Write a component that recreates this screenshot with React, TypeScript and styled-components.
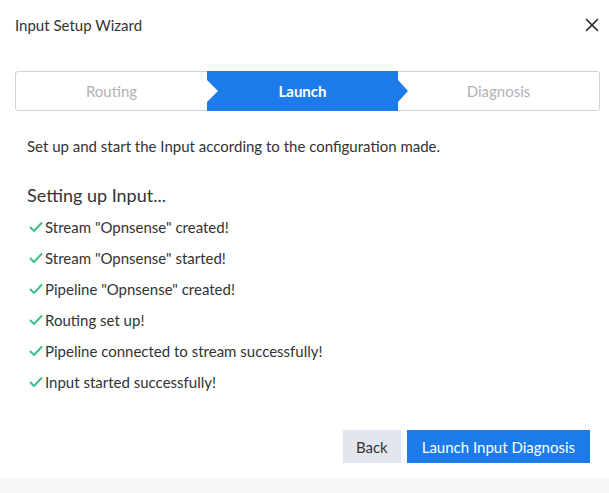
import styled, { createGlobalStyle } from 'styled-components';

const GlobalStyle = createGlobalStyle`
    html, body {
        margin: 0;
        padding: 0;
        background: #f7f7f8;
    }
    body {
        font-family: Lato, 'Noto Sans', sans-serif;
        color: #333840;
    }
`;

const steps = ['Routing', 'Launch', 'Diagnosis'];
const activeStep = 1;

const results = [
    'Stream "Opnsense" created!',
    'Stream "Opnsense" started!',
    'Pipeline "Opnsense" created!',
    'Routing set up!',
    'Pipeline connected to stream successfully!',
    'Input started successfully!'
];

const CheckIcon = () => (
    <svg width="14" height="12" viewBox="0 0 14 12" fill="none">
        <path d="M1.5 6.5 L5 10 L12.5 2" stroke="#3cc08c" strokeWidth="2" strokeLinecap="round" strokeLinejoin="round" />
    </svg>
);

const CloseIcon = () => (
    <svg width="14" height="14" viewBox="0 0 14 14" fill="none">
        <path d="M1.5 1.5 L12.5 12.5 M12.5 1.5 L1.5 12.5" stroke="#222" strokeWidth="1.6" strokeLinecap="round" />
    </svg>
);

export default function App() {
    return (
        <>
            <GlobalStyle />
            <Modal>
                <Header>
                    <Title>Input Setup Wizard</Title>
                    <CloseButton type="button" aria-label="Close">
                        <CloseIcon />
                    </CloseButton>
                </Header>
                <Stepper>
                    {steps.map((s, i) => (
                        <Step key={s} $active={i === activeStep}>
                            {s}
                            {i === activeStep && <Arrow />}
                        </Step>
                    ))}
                </Stepper>
                <Body>
                    <Lead>Set up and start the Input according to the configuration made.</Lead>
                    <Heading>Setting up Input...</Heading>
                    <List>
                        {results.map((r) => (
                            <Item key={r}>
                                <CheckIcon />
                                <span>{r}</span>
                            </Item>
                        ))}
                    </List>
                </Body>
                <Footer>
                    <Button type="button">Back</Button>
                    <Button type="button" $primary>
                        Launch Input Diagnosis
                    </Button>
                </Footer>
            </Modal>
        </>
    );
}

const Modal = styled.div`
    width: 609px;
    height: 478px;
    background: #fff;
    box-sizing: border-box;
    padding: 0 9px 0 15px;
    display: flex;
    flex-direction: column;
`;

const Header = styled.div`
    display: flex;
    justify-content: space-between;
    align-items: center;
    height: 50px;
`;

const Title = styled.h4`
    margin: 0;
    font-size: 15px;
    font-weight: 400;
    color: #333;
`;

const CloseButton = styled.button`
    border: none;
    background: none;
    padding: 0;
    width: 16px;
    height: 16px;
    display: flex;
    align-items: center;
    justify-content: center;
    cursor: pointer;
`;

const Stepper = styled.div`
    margin-top: 21px;
    width: 585px;
    height: 40px;
    box-sizing: border-box;
    border: 1px solid #d0d2d6;
    border-radius: 3px;
    display: grid;
    grid-template-columns: 191px 191px 1fr;
`;

const Step = styled.div<{ $active?: boolean }>`
    position: relative;
    display: flex;
    align-items: center;
    justify-content: center;
    font-size: 15px;
    color: ${(p) => (p.$active ? '#fff' : '#b3b3b3')};
    background: ${(p) => (p.$active ? '#1a7be9' : 'transparent')};
    margin: ${(p) => (p.$active ? '-1px 0' : '0')};
    font-weight: ${(p) => (p.$active ? 700 : 400)};
    ${(p) =>
        p.$active &&
        `
        &::before {
            content: '';
            position: absolute;
            left: 0;
            top: 50%;
            transform: translateY(-50%);
            border-top: 11px solid transparent;
            border-bottom: 11px solid transparent;
            border-left: 11px solid #fff;
        }
    `}
`;

const Arrow = styled.span`
    position: absolute;
    right: -10px;
    top: 50%;
    transform: translateY(-50%);
    border-top: 11px solid transparent;
    border-bottom: 11px solid transparent;
    border-left: 10px solid #1a7be9;
`;

const Body = styled.div`
    padding: 0 12px;
    flex: 1;
`;

const Lead = styled.p`
    margin: 26px 0 0;
    font-size: 15px;
    line-height: 18px;
    color: #333;
`;

const Heading = styled.h3`
    margin: 29px 0 0;
    font-size: 18px;
    font-weight: 400;
    color: #333;
`;

const List = styled.ul`
    list-style: none;
    margin: 10px 0 0;
    padding: 0;
    display: flex;
    flex-direction: column;
    gap: 10px;
`;

const Item = styled.li`
    display: flex;
    align-items: center;
    gap: 2px;
    height: 21px;
    font-size: 15px;
    color: #333;

    svg {
        margin-left: 2px;
        flex-shrink: 0;
    }
`;

const Footer = styled.div`
    display: flex;
    justify-content: flex-end;
    gap: 6px;
    padding: 0 10px 15px 0;
`;

const Button = styled.button<{ $primary?: boolean }>`
    border: none;
    height: 33px;
    padding: 0 ${(p) => (p.$primary ? 15 : 13)}px;
    font-family: inherit;
    font-size: 15px;
    cursor: pointer;
    background: ${(p) => (p.$primary ? '#1a7be9' : '#e3e6ee')};
    color: ${(p) => (p.$primary ? '#fff' : '#333')};
`;
